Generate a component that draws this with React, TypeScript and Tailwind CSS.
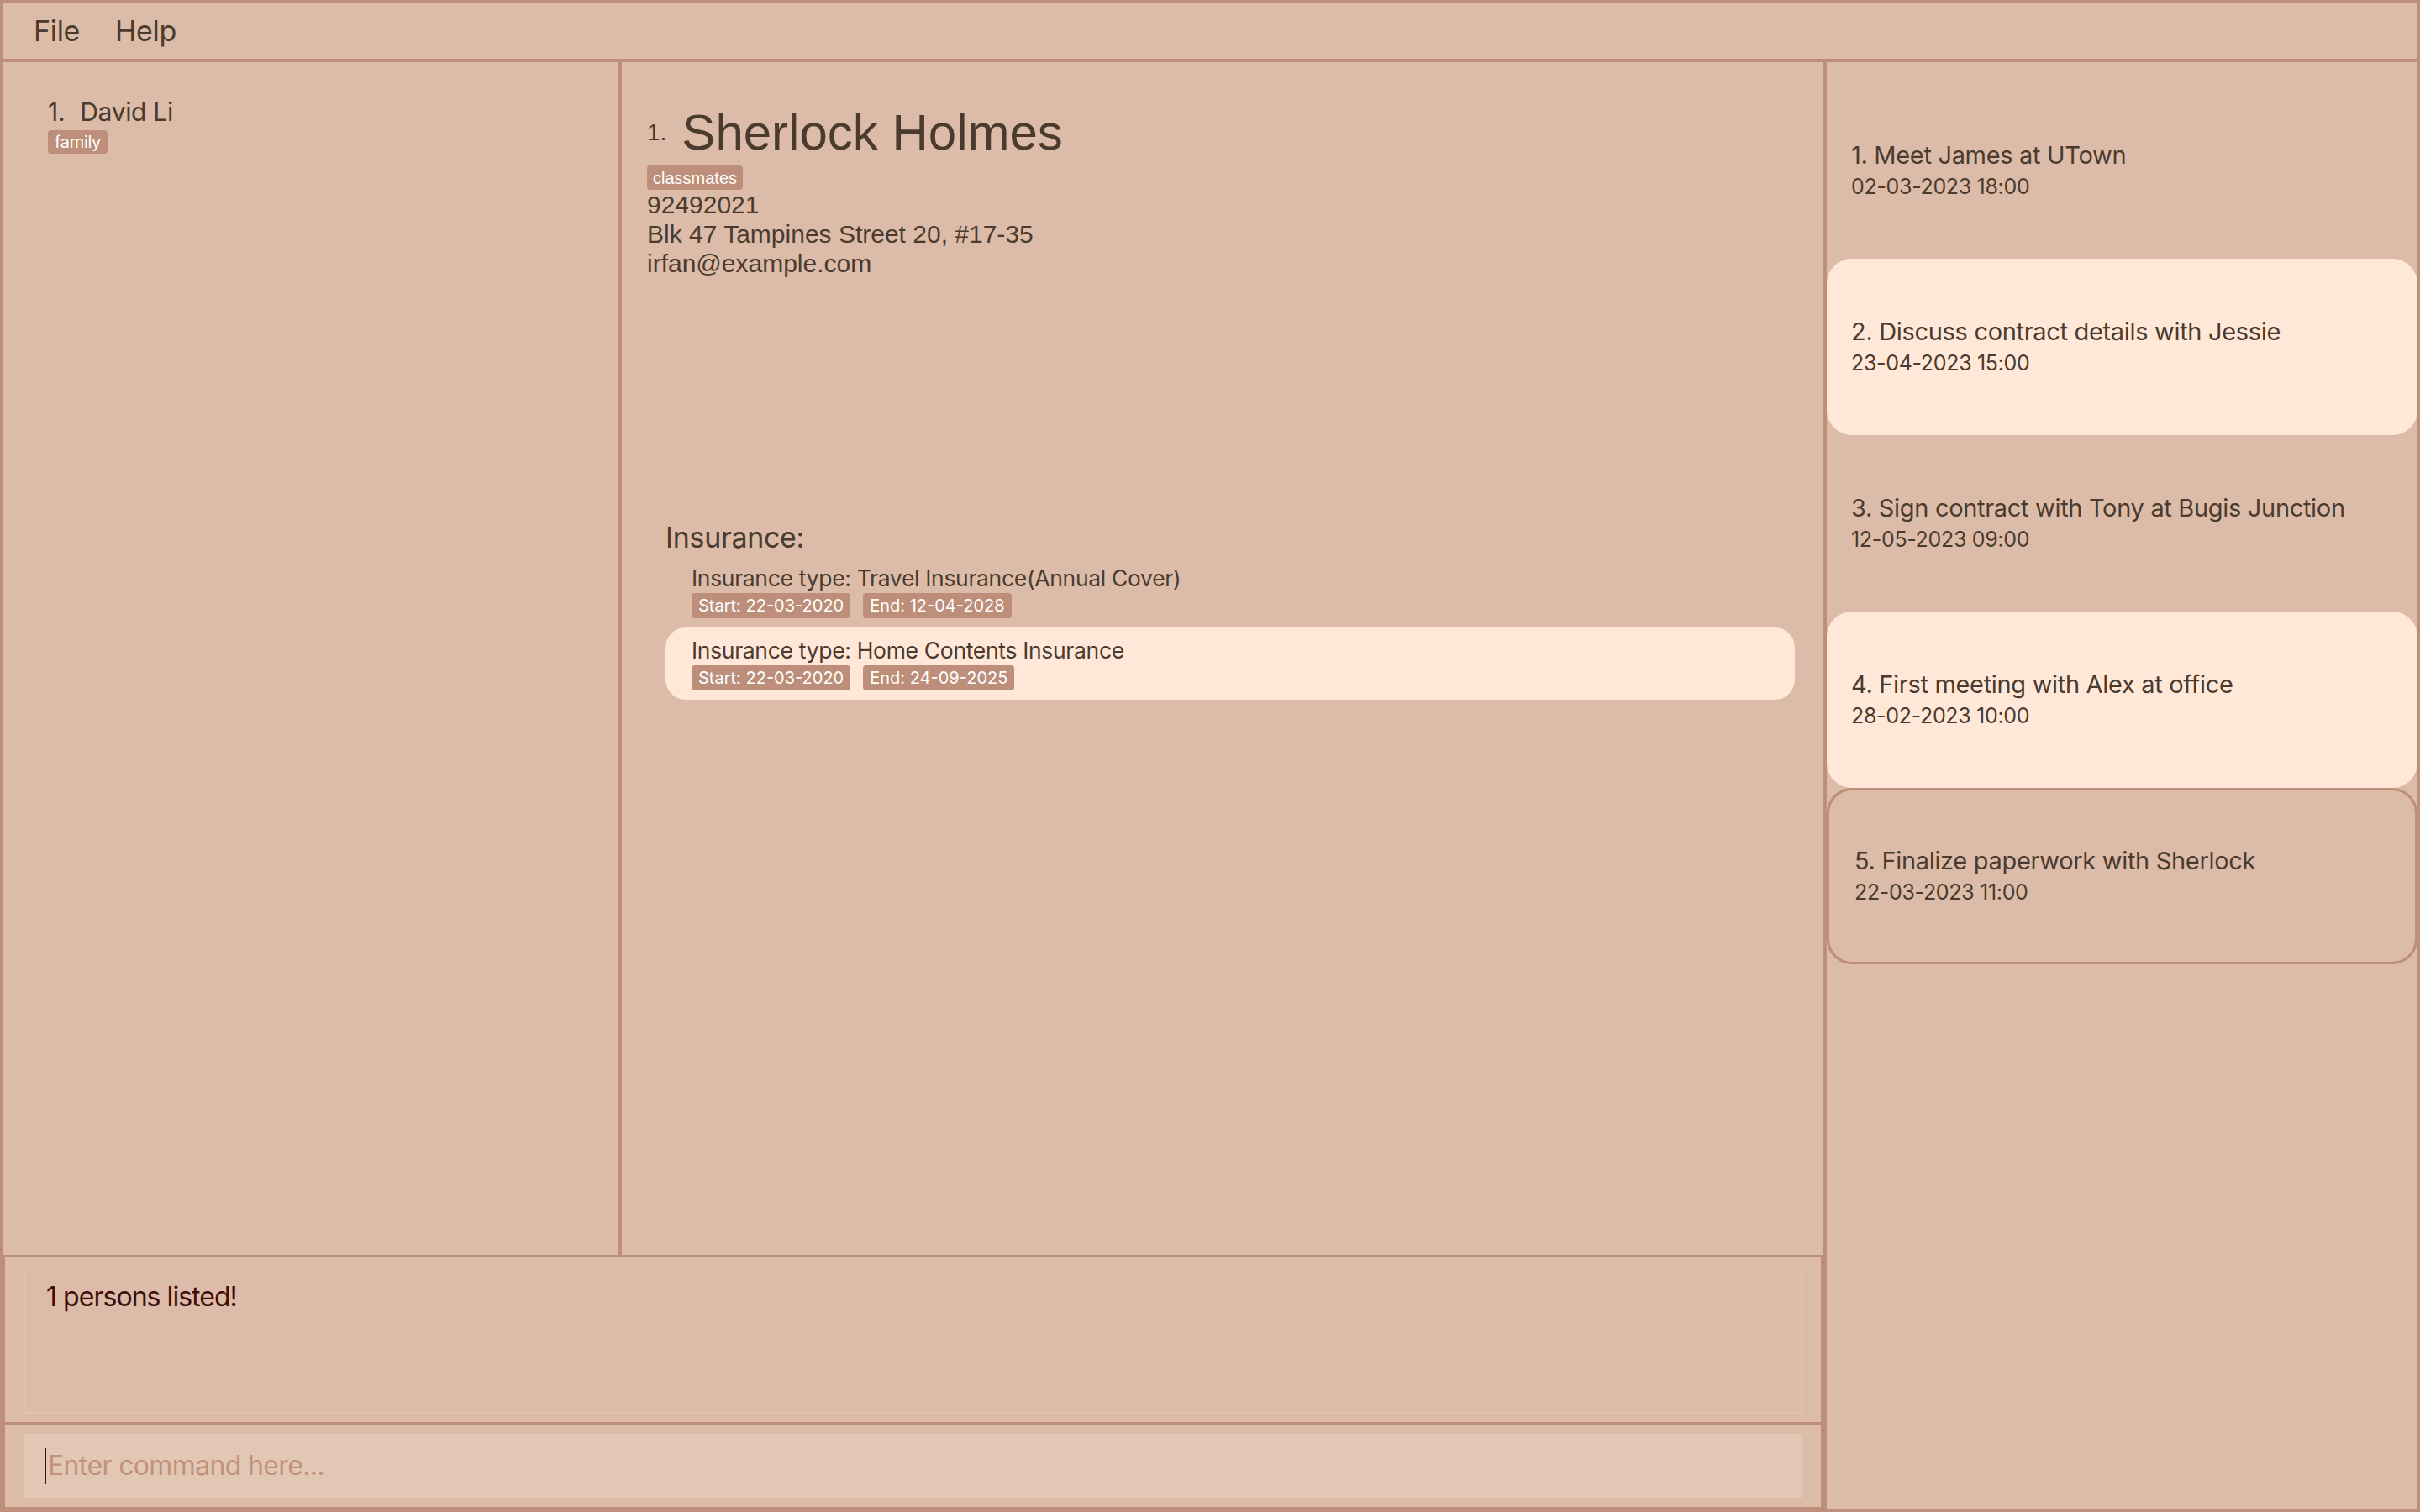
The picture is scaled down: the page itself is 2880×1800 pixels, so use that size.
import React from 'react';

type Policy = { type: string; start: string; end: string; selected?: boolean };
type Meeting = { title: string; when: string; state?: 'selected' | 'focused' };

const policies: Policy[] = [
  { type: 'Travel Insurance(Annual Cover)', start: '22-03-2020', end: '12-04-2028' },
  { type: 'Home Contents Insurance', start: '22-03-2020', end: '24-09-2025', selected: true },
];

const meetings: Meeting[] = [
  { title: '1. Meet James at UTown', when: '02-03-2023 18:00' },
  { title: '2. Discuss contract details with Jessie', when: '23-04-2023 15:00', state: 'selected' },
  { title: '3. Sign contract with Tony at Bugis Junction', when: '12-05-2023 09:00' },
  { title: '4. First meeting with Alex at office', when: '28-02-2023 10:00', state: 'selected' },
  { title: '5. Finalize paperwork with Sherlock', when: '22-03-2023 11:00', state: 'focused' },
];

const sans = "font-['Inter','Noto_Sans',sans-serif]";
const arial = "font-['Liberation_Sans','Arial',sans-serif]";

const Chip: React.FC<{ children: React.ReactNode; className?: string }> = ({ children, className = '' }) => (
  <span className={`inline-flex items-center rounded-[4px] bg-[#bd8e79] text-white ${className}`}>{children}</span>
);

const PersonList: React.FC = () => (
  <div className="w-[733px] pl-[54px] pt-[41px]">
    <div className="flex items-center gap-[18px] text-[30px] leading-[36px]">
      <span>1.</span>
      <span>David Li</span>
    </div>
    <div className="mt-[4px] flex">
      <Chip className="h-[28px] px-[8px] text-[20px]">family</Chip>
    </div>
  </div>
);

const PersonDetail: React.FC = () => (
  <div className="flex-1 border-l-4 border-[#bd8e79] pt-[50px]">
    <div className={`pl-[30px] tracking-normal ${arial}`}>
      <div className="flex h-[68px] items-center gap-[18px]">
        <span className="text-[28px]">1.</span>
        <span className="text-[60px] leading-[68px]">Sherlock Holmes</span>
      </div>
      <div className="mt-[5px] flex">
        <Chip className="h-[29px] px-[7px] text-[20px]">classmates</Chip>
      </div>
      <div className="text-[30px] leading-[35px]">
        <div>92492021</div>
        <div>Blk 47 Tampines Street 20, #17-35</div>
        <div>irfan@example.com</div>
      </div>
    </div>

    <div className="mt-[288px] pl-[52px] pr-[34px]">
      <div className="text-[34px] leading-[42px]">Insurance:</div>
      {policies.map((p) => (
        <div
          key={p.type}
          className={`h-[86px] rounded-[24px] pl-[31px] pt-[12px] ${p.selected ? 'bg-[#ffe8d7]' : ''}`}
        >
          <div className="text-[26.5px] leading-[30px]">Insurance type: {p.type}</div>
          <div className="mt-[3px] flex gap-[15px] tracking-normal">
            <Chip className="h-[30px] px-[8px] text-[20px]">Start: {p.start}</Chip>
            <Chip className="h-[30px] px-[8px] text-[20px]">End: {p.end}</Chip>
          </div>
        </div>
      ))}
    </div>
  </div>
);

const MeetingList: React.FC = () => (
  <div className="w-[707px] border-l-4 border-[#bd8e79] pt-[24px]">
    {meetings.map((m) => (
      <div
        key={m.title}
        className={`flex h-[210px] flex-col justify-center rounded-[30px] pl-[29px] ${
          m.state === 'selected' ? 'bg-[#ffe8d7]' : ''
        } ${m.state === 'focused' ? 'border-[3px] border-[#bd8e79] pl-[30px]' : ''}`}
      >
        <div className="text-[29px] leading-[38px]">{m.title}</div>
        <div className="text-[25px] leading-[36px]">{m.when}</div>
      </div>
    ))}
  </div>
);

export default function App() {
  return (
    <div
      className={`flex h-[1800px] w-[2880px] flex-col border-[3px] border-[#bd8e79] bg-[#dcbca8] tracking-[-0.02em] text-[#4b3b2e] ${sans}`}
    >
      <div className="flex h-[71px] shrink-0 items-center gap-[42px] border-b-4 border-[#bd8e79] pl-[37px] text-[34px]">
        <span>File</span>
        <span>Help</span>
      </div>

      <div className="flex min-h-0 flex-1">
        <div className="flex min-w-0 flex-1 flex-col">
          <div className="flex min-h-0 flex-1">
            <PersonList />
            <PersonDetail />
          </div>

          <div className="h-[199px] shrink-0 border-x-[3px] border-t-[3px] border-[#bd8e79] px-[22px] pt-[11px] pb-[10px]">
            <div className="h-full border-2 border-[#e0c2ae] pl-[25px] pt-[14px] text-[32px] leading-[40px] tracking-[-0.03em] text-[#400b0b]">
              1 persons listed!
            </div>
          </div>

          <div className="h-[104px] shrink-0 border-[3px] border-t-4 border-[#bd8e79] px-[22px] pt-[10px] pb-[11px]">
            <div className="flex h-full items-center gap-[2px] bg-[#e2c7b5] pl-[25px]">
              <div className="h-[43px] w-[2px] bg-[#2b1d14]" />
              <input
                readOnly
                placeholder="Enter command here..."
                className="min-w-0 flex-1 bg-transparent text-[32px] tracking-[-0.02em] outline-none placeholder:text-[#c1917c]"
              />
            </div>
          </div>
        </div>

        <MeetingList />
      </div>
    </div>
  );
}
